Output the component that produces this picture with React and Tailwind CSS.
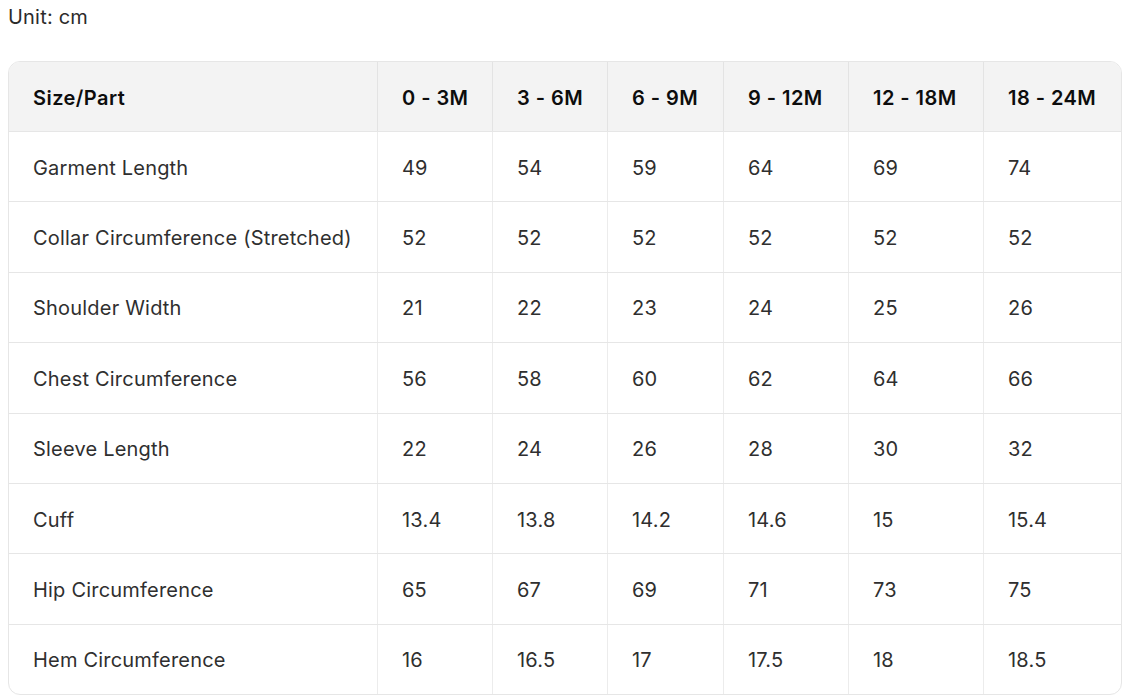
const headers = ["Size/Part", "0 - 3M", "3 - 6M", "6 - 9M", "9 - 12M", "12 - 18M", "18 - 24M"];

const rows = [
  ["Garment Length", "49", "54", "59", "64", "69", "74"],
  ["Collar Circumference (Stretched)", "52", "52", "52", "52", "52", "52"],
  ["Shoulder Width", "21", "22", "23", "24", "25", "26"],
  ["Chest Circumference", "56", "58", "60", "62", "64", "66"],
  ["Sleeve Length", "22", "24", "26", "28", "30", "32"],
  ["Cuff", "13.4", "13.8", "14.2", "14.6", "15", "15.4"],
  ["Hip Circumference", "65", "67", "69", "71", "73", "75"],
  ["Hem Circumference", "16", "16.5", "17", "17.5", "18", "18.5"],
];

const cols = "grid grid-cols-[368px_115px_115px_116px_125px_135px_138px]";

export default function App() {
  return (
    <div className="min-h-screen bg-white px-2 pt-[5px] font-['Inter',sans-serif] text-[20px] tracking-[0.2px]">
      {/* unit label */}
      <div className="leading-[24px] text-[#2b2b2b]">Unit: cm</div>

      {/* size table */}
      <div className="mt-[32px] w-[1114px] overflow-hidden rounded-xl border border-[#e6e6e6]">
        <div className={`${cols} h-[69px] bg-[#f3f3f3] font-semibold tracking-[0.45px] text-[#0d0d0d]`}>
          {headers.map((h, i) => (
            <div key={h} className={`flex items-center pl-6 pt-[2px] ${i > 0 ? "border-l border-[#e3e3e3]" : ""}`}>
              {h}
            </div>
          ))}
        </div>
        {rows.map((r) => (
          <div key={r[0]} className={`${cols} h-[70.4px] border-t border-[#e6e6e6] text-[#2f2f2f]`}>
            {r.map((c, i) => (
              <div key={i} className={`flex items-center pl-6 pt-[2px] ${i > 0 ? "border-l border-[#ececec]" : ""}`}>
                {c}
              </div>
            ))}
          </div>
        ))}
      </div>
    </div>
  );
}
